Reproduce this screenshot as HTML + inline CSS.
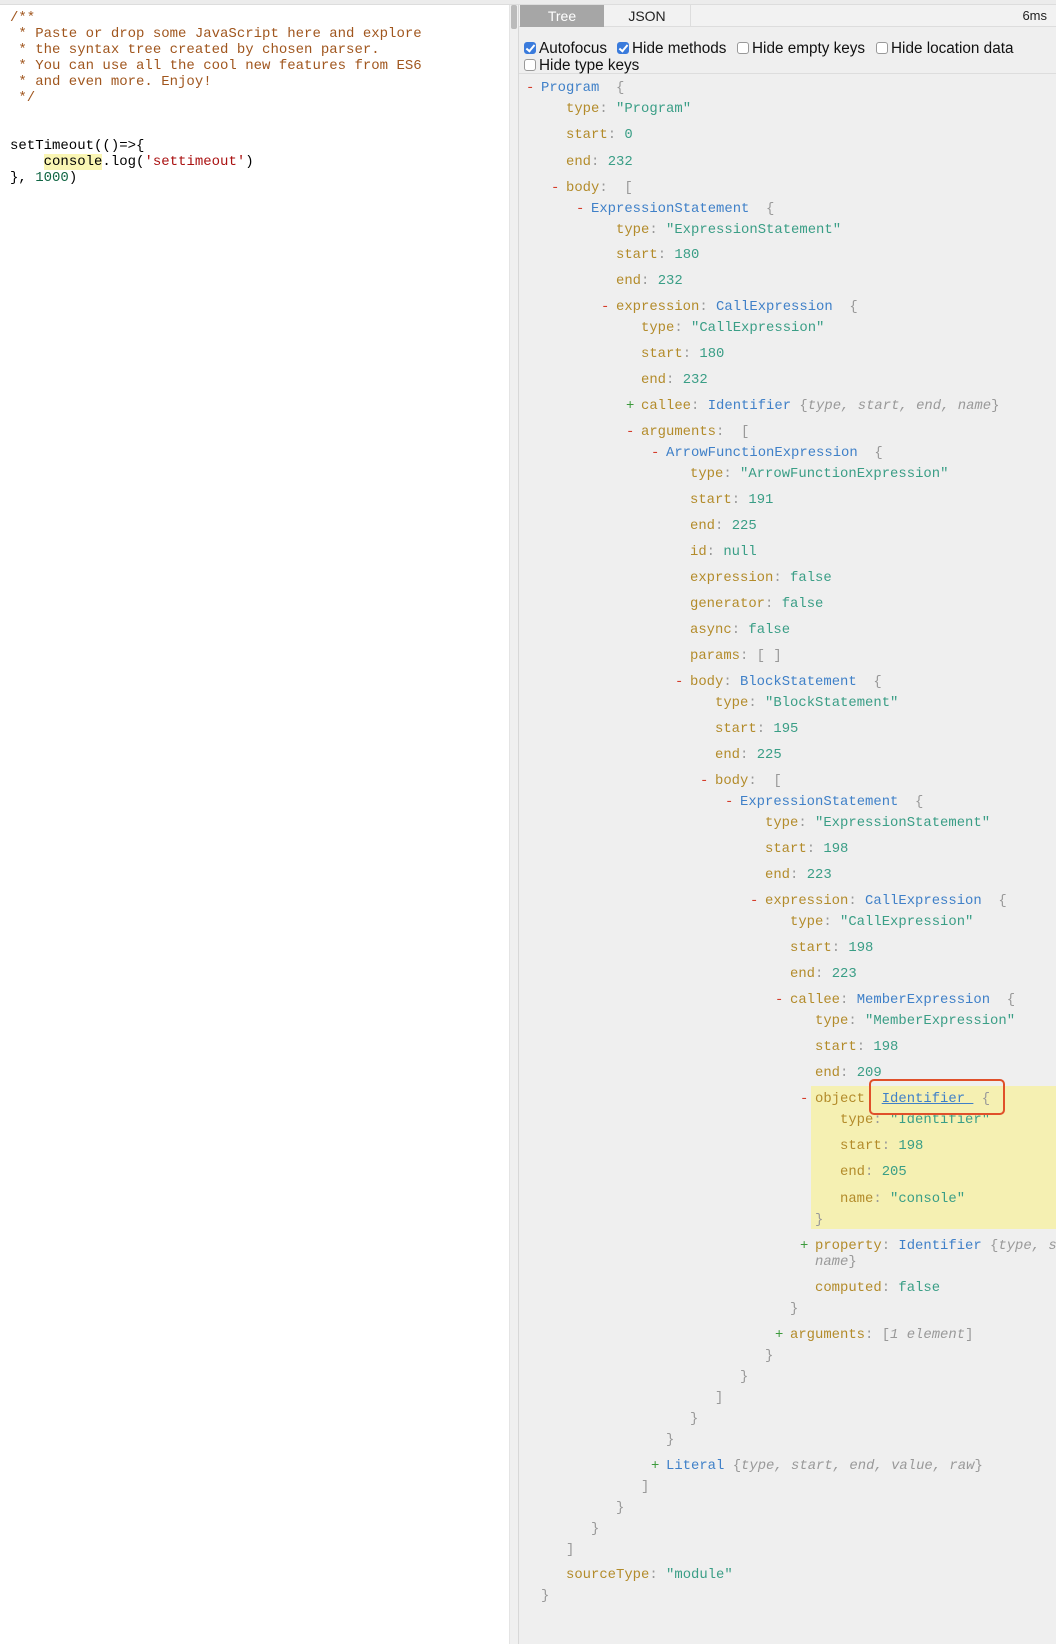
<!DOCTYPE html>
<html><head><meta charset="utf-8"><style>
*{margin:0;padding:0;box-sizing:border-box}
body{width:1056px;height:1644px;position:relative;background:#fff;overflow:hidden;font-family:"Liberation Sans",sans-serif}
#top{position:absolute;left:0;top:0;width:1056px;height:5px;background:#ececec;border-bottom:1px solid #ddd}
#ed{position:absolute;left:0;top:5px;width:509px;height:1639px;background:#fff}
#ed pre{position:absolute;left:10px;top:5px;font:14px/16px "Liberation Mono",monospace;color:#000}
.c{color:#a0561e}.s{color:#a11}.n{color:#164}
.hl{background:#faf6b4}
#sb{position:absolute;left:509px;top:5px;width:9px;height:1639px;background:#f0f0f0;border-left:1px solid #e4e4e4}
#sb div{position:absolute;left:1px;top:0;width:6px;height:24px;background:#bbb;border-radius:2px}
#rp{position:absolute;left:518px;top:5px;width:538px;height:1639px;background:#efefef;border-left:1px solid #d8d8d8}
#tabs{position:absolute;left:0;top:0;width:538px;height:22px;border-bottom:1px solid #ddd;background:#f2f2f2}
.tab{position:absolute;top:0;height:22px;line-height:22px;text-align:center;font-size:14px}
#t1{left:1px;width:84px;background:#a6a6a6;color:#fff}
#t2{left:85px;width:87px;color:#222;border-right:1px solid #ddd}
#ms{position:absolute;right:10px;top:0;line-height:22px;font-size:13px;color:#222}
#opts{position:absolute;left:0;top:29px;width:538px;height:40px;border-bottom:1px solid #ddd;color:#111}
.cb{position:absolute;font-size:15.3px;line-height:17px;white-space:nowrap}
.bx{display:inline-block;width:12px;height:12px;border:1px solid #999;border-radius:3px;background:#fff;vertical-align:-1px;margin-right:3px;position:relative}
.bx.on{background:#3a7bdc;border-color:#3a7bdc}
.bx.on:after{content:"";position:absolute;left:3px;top:0px;width:3px;height:7px;border:solid #fff;border-width:0 2px 2px 0;transform:rotate(40deg)}
.L{position:absolute;height:18px;line-height:18px;font:13.9px/18px "Liberation Mono",monospace;white-space:pre;color:#999}
.k{color:#b38b2a}.b{color:#3f80c8}.v{color:#3a9e86}.p{color:#999}.i{color:#999;font-style:italic}
.m{color:#d53c2a;position:absolute;left:-15px}.pl{color:#3c9a3c;position:absolute;left:-15px}
#yel{position:absolute;left:811px;top:1086px;width:245px;height:143px;background:#f5f0b2}
#red{position:absolute;left:869px;top:1079px;width:136px;height:36px;border:2px solid #e0502a;border-radius:5px}
</style></head><body>
<div id="top"></div>
<div id="ed"><pre><span class="c">/**
 * Paste or drop some JavaScript here and explore
 * the syntax tree created by chosen parser.
 * You can use all the cool new features from ES6
 * and even more. Enjoy!
 */</span>


setTimeout(()=>{
    <span class="hl">console</span>.log(<span class="s">'settimeout'</span>)
}, <span class="n">1000</span>)</pre></div>
<div id="sb"><div></div></div>
<div id="rp">
<div id="tabs"><div class="tab" id="t1">Tree</div><div class="tab" id="t2">JSON</div><div id="ms">6ms</div></div>
<div id="opts">
<div class="cb" style="left:5px;top:6px"><span class="bx on"></span>Autofocus</div>
<div class="cb" style="left:98px;top:6px"><span class="bx on"></span>Hide methods</div>
<div class="cb" style="left:218px;top:6px"><span class="bx"></span>Hide empty keys</div>
<div class="cb" style="left:357px;top:6px"><span class="bx"></span>Hide location data</div>
<div class="cb" style="left:5px;top:23px"><span class="bx"></span>Hide type keys</div>
</div>
</div>
<div id="yel"></div>

<div class="L" style="left:541px;top:79px"><span class="m">-</span><span class="b">Program</span>  {</div>
<div class="L" style="left:566px;top:100px"><span class="k">type</span>: <span class="v">"Program"</span></div>
<div class="L" style="left:566px;top:126px"><span class="k">start</span>: <span class="v">0</span></div>
<div class="L" style="left:566px;top:153px"><span class="k">end</span>: <span class="v">232</span></div>
<div class="L" style="left:566px;top:179px"><span class="m">-</span><span class="k">body</span>:  [</div>
<div class="L" style="left:591px;top:200px"><span class="m">-</span><span class="b">ExpressionStatement</span>  {</div>
<div class="L" style="left:616px;top:221px"><span class="k">type</span>: <span class="v">"ExpressionStatement"</span></div>
<div class="L" style="left:616px;top:246px"><span class="k">start</span>: <span class="v">180</span></div>
<div class="L" style="left:616px;top:272px"><span class="k">end</span>: <span class="v">232</span></div>
<div class="L" style="left:616px;top:298px"><span class="m">-</span><span class="k">expression</span>: <span class="b">CallExpression</span>  {</div>
<div class="L" style="left:641px;top:319px"><span class="k">type</span>: <span class="v">"CallExpression"</span></div>
<div class="L" style="left:641px;top:345px"><span class="k">start</span>: <span class="v">180</span></div>
<div class="L" style="left:641px;top:371px"><span class="k">end</span>: <span class="v">232</span></div>
<div class="L" style="left:641px;top:397px"><span class="pl">+</span><span class="k">callee</span>: <span class="b">Identifier</span> {<span class="i">type, start, end, name</span>}</div>
<div class="L" style="left:641px;top:423px"><span class="m">-</span><span class="k">arguments</span>:  [</div>
<div class="L" style="left:666px;top:444px"><span class="m">-</span><span class="b">ArrowFunctionExpression</span>  {</div>
<div class="L" style="left:690px;top:465px"><span class="k">type</span>: <span class="v">"ArrowFunctionExpression"</span></div>
<div class="L" style="left:690px;top:491px"><span class="k">start</span>: <span class="v">191</span></div>
<div class="L" style="left:690px;top:517px"><span class="k">end</span>: <span class="v">225</span></div>
<div class="L" style="left:690px;top:543px"><span class="k">id</span>: <span class="v">null</span></div>
<div class="L" style="left:690px;top:569px"><span class="k">expression</span>: <span class="v">false</span></div>
<div class="L" style="left:690px;top:595px"><span class="k">generator</span>: <span class="v">false</span></div>
<div class="L" style="left:690px;top:621px"><span class="k">async</span>: <span class="v">false</span></div>
<div class="L" style="left:690px;top:647px"><span class="k">params</span>: [ ]</div>
<div class="L" style="left:690px;top:673px"><span class="m">-</span><span class="k">body</span>: <span class="b">BlockStatement</span>  {</div>
<div class="L" style="left:715px;top:694px"><span class="k">type</span>: <span class="v">"BlockStatement"</span></div>
<div class="L" style="left:715px;top:720px"><span class="k">start</span>: <span class="v">195</span></div>
<div class="L" style="left:715px;top:746px"><span class="k">end</span>: <span class="v">225</span></div>
<div class="L" style="left:715px;top:772px"><span class="m">-</span><span class="k">body</span>:  [</div>
<div class="L" style="left:740px;top:793px"><span class="m">-</span><span class="b">ExpressionStatement</span>  {</div>
<div class="L" style="left:765px;top:814px"><span class="k">type</span>: <span class="v">"ExpressionStatement"</span></div>
<div class="L" style="left:765px;top:840px"><span class="k">start</span>: <span class="v">198</span></div>
<div class="L" style="left:765px;top:866px"><span class="k">end</span>: <span class="v">223</span></div>
<div class="L" style="left:765px;top:892px"><span class="m">-</span><span class="k">expression</span>: <span class="b">CallExpression</span>  {</div>
<div class="L" style="left:790px;top:913px"><span class="k">type</span>: <span class="v">"CallExpression"</span></div>
<div class="L" style="left:790px;top:939px"><span class="k">start</span>: <span class="v">198</span></div>
<div class="L" style="left:790px;top:965px"><span class="k">end</span>: <span class="v">223</span></div>
<div class="L" style="left:790px;top:991px"><span class="m">-</span><span class="k">callee</span>: <span class="b">MemberExpression</span>  {</div>
<div class="L" style="left:815px;top:1012px"><span class="k">type</span>: <span class="v">"MemberExpression"</span></div>
<div class="L" style="left:815px;top:1038px"><span class="k">start</span>: <span class="v">198</span></div>
<div class="L" style="left:815px;top:1064px"><span class="k">end</span>: <span class="v">209</span></div>
<div class="L" style="left:815px;top:1090px"><span class="m">-</span><span class="k">object</span>  <span class="b" style="text-decoration:underline">Identifier </span> {</div>
<div class="L" style="left:840px;top:1111px"><span class="k">type</span>: <span class="v">"Identifier"</span></div>
<div class="L" style="left:840px;top:1137px"><span class="k">start</span>: <span class="v">198</span></div>
<div class="L" style="left:840px;top:1163px"><span class="k">end</span>: <span class="v">205</span></div>
<div class="L" style="left:840px;top:1190px"><span class="k">name</span>: <span class="v">"console"</span></div>
<div class="L" style="left:815px;top:1211px">}</div>
<div class="L" style="left:815px;top:1237px"><span class="pl">+</span><span class="k">property</span>: <span class="b">Identifier</span> {<span class="i">type, s</span></div>
<div class="L" style="left:815px;top:1253px"><span class="i">name</span>}</div>
<div class="L" style="left:815px;top:1279px"><span class="k">computed</span>: <span class="v">false</span></div>
<div class="L" style="left:790px;top:1300px">}</div>
<div class="L" style="left:790px;top:1326px"><span class="pl">+</span><span class="k">arguments</span>: [<span class="i">1 element</span>]</div>
<div class="L" style="left:765px;top:1347px">}</div>
<div class="L" style="left:740px;top:1368px">}</div>
<div class="L" style="left:715px;top:1389px">]</div>
<div class="L" style="left:690px;top:1410px">}</div>
<div class="L" style="left:666px;top:1431px">}</div>
<div class="L" style="left:666px;top:1457px"><span class="pl">+</span><span class="b">Literal</span> {<span class="i">type, start, end, value, raw</span>}</div>
<div class="L" style="left:641px;top:1478px">]</div>
<div class="L" style="left:616px;top:1499px">}</div>
<div class="L" style="left:591px;top:1520px">}</div>
<div class="L" style="left:566px;top:1541px">]</div>
<div class="L" style="left:566px;top:1566px"><span class="k">sourceType</span>: <span class="v">"module"</span></div>
<div class="L" style="left:541px;top:1587px">}</div>
<div id="red"></div>
</body></html>
